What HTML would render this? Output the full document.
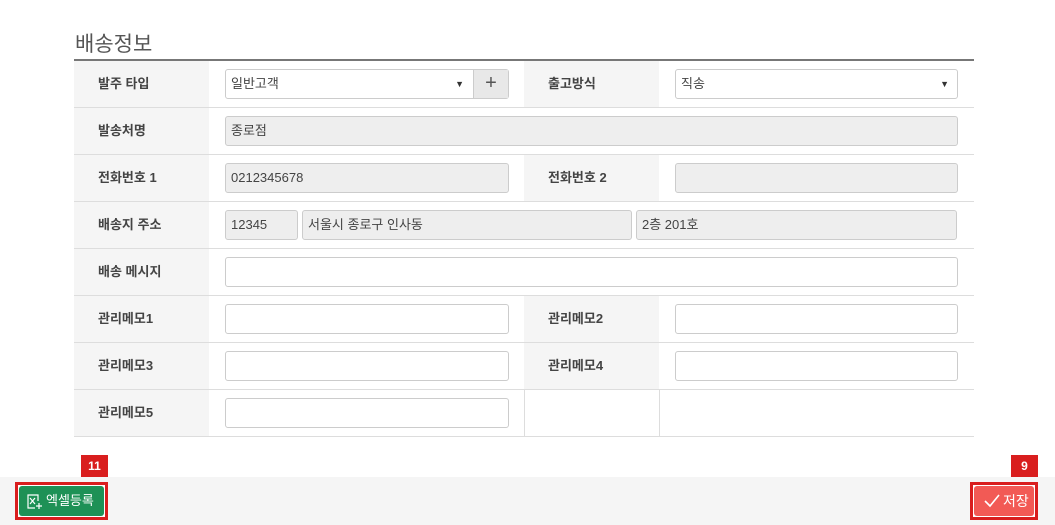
<!DOCTYPE html>
<html><head><meta charset="utf-8"><style>
*{box-sizing:border-box;margin:0;padding:0}
body{width:1055px;height:525px;background:#fff;font-family:"Liberation Sans","Noto Sans CJK KR",sans-serif;position:relative;overflow:hidden;color:#333}
.t{position:absolute;left:75px;top:28px;font-size:21px;color:#555}
.line{position:absolute;left:74px;top:59px;width:900px;height:2px;background:#777}
.row{position:absolute;left:74px;width:900px;height:47px;border-bottom:1px solid #ddd}
.lb{position:absolute;top:0;height:46px;width:135px;background:#f5f5f5;font-size:13px;font-weight:bold;color:#444;line-height:46px;padding-left:24px}
.in{position:absolute;height:30px;border:1px solid #ccc;border-radius:3px;background:#fff;font-size:13px;line-height:28px;padding-left:5px;color:#444}
.g{background:#eee}
.vl{position:absolute;top:0;height:46px;width:1px;background:#ddd}
.foot{position:absolute;left:0;top:477px;width:1055px;height:48px;background:#f5f5f5}
.badge{position:absolute;background:#d91e1e;color:#fff;font-size:12px;font-weight:bold;text-align:center;line-height:22px;height:22px}
.box{position:absolute;border:3px solid #d91e1e;background:#fff}
.arrow{position:absolute;right:8px;top:0;font-size:9px;color:#333}
</style></head><body>
<div class="t">배송정보</div>
<div class="line"></div>

<div class="row" style="top:61px">
<div class="lb" style="left:0">발주 타입</div>
<div class="in" style="left:151px;top:8px;width:284px;border-radius:3px">일반고객<span class="arrow" style="right:44px">▼</span></div>
<div style="position:absolute;left:399px;top:9px;width:35px;height:28px;background:#e8e8e8;border-left:1px solid #ccc;font-size:20px;text-align:center;line-height:26px;color:#555">+</div>
<div class="vl" style="left:450px"></div>
<div class="lb" style="left:450px;width:135px">출고방식</div>
<div class="in" style="left:601px;top:8px;width:283px">직송<span class="arrow">▼</span></div>
</div>

<div class="row" style="top:108px">
<div class="lb" style="left:0">발송처명</div>
<div class="in g" style="left:151px;top:8px;width:733px">종로점</div>
</div>

<div class="row" style="top:155px">
<div class="lb" style="left:0">전화번호 1</div>
<div class="in g" style="left:151px;top:8px;width:284px">0212345678</div>
<div class="vl" style="left:450px"></div>
<div class="lb" style="left:450px">전화번호 2</div>
<div class="in g" style="left:601px;top:8px;width:283px"></div>
</div>

<div class="row" style="top:202px">
<div class="lb" style="left:0">배송지 주소</div>
<div class="in g" style="left:151px;top:8px;width:73px">12345</div>
<div class="in g" style="left:228px;top:8px;width:330px">서울시 종로구 인사동</div>
<div class="in g" style="left:562px;top:8px;width:321px">2층 201호</div>
</div>

<div class="row" style="top:249px">
<div class="lb" style="left:0">배송 메시지</div>
<div class="in" style="left:151px;top:8px;width:733px"></div>
</div>

<div class="row" style="top:296px">
<div class="lb" style="left:0">관리메모1</div>
<div class="in" style="left:151px;top:8px;width:284px"></div>
<div class="vl" style="left:450px"></div>
<div class="lb" style="left:450px">관리메모2</div>
<div class="in" style="left:601px;top:8px;width:283px"></div>
</div>

<div class="row" style="top:343px">
<div class="lb" style="left:0">관리메모3</div>
<div class="in" style="left:151px;top:8px;width:284px"></div>
<div class="vl" style="left:450px"></div>
<div class="lb" style="left:450px">관리메모4</div>
<div class="in" style="left:601px;top:8px;width:283px"></div>
</div>

<div class="row" style="top:390px">
<div class="lb" style="left:0">관리메모5</div>
<div class="in" style="left:151px;top:8px;width:284px"></div>
<div class="vl" style="left:450px"></div>
<div class="vl" style="left:585px"></div>
</div>

<div class="foot"></div>
<div class="badge" style="left:81px;top:455px;width:27px">11</div>
<div class="box" style="left:15px;top:482px;width:93px;height:38px">
<div style="position:absolute;left:1px;top:1px;width:85px;height:30px;background:#1e9156;border-radius:3px;color:#fff;font-size:13px;line-height:30px;padding-left:27px">엑셀등록
<svg style="position:absolute;left:7px;top:7px" width="17" height="17" viewBox="0 0 17 17" fill="none" stroke="#fff" stroke-width="1.2"><path d="M9 15H2V2h10v6"/><path d="M4 5l5 6M9 5l-5 6"/><path d="M13 10v6M10 13h6"/></svg></div></div>

<div class="badge" style="left:1011px;top:455px;width:27px">9</div>
<div class="box" style="left:970px;top:482px;width:68px;height:38px">
<div style="position:absolute;left:1px;top:1px;width:60px;height:30px;background:#f25a55;border-radius:3px;color:#fff;font-size:14px;line-height:30px;padding-left:29px">저장
<svg style="position:absolute;left:10px;top:8px" width="16" height="14" viewBox="0 0 16 14" fill="none" stroke="#fff" stroke-width="1.6"><path d="M1 7l5 5 9-11"/></svg></div></div>
</body></html>
